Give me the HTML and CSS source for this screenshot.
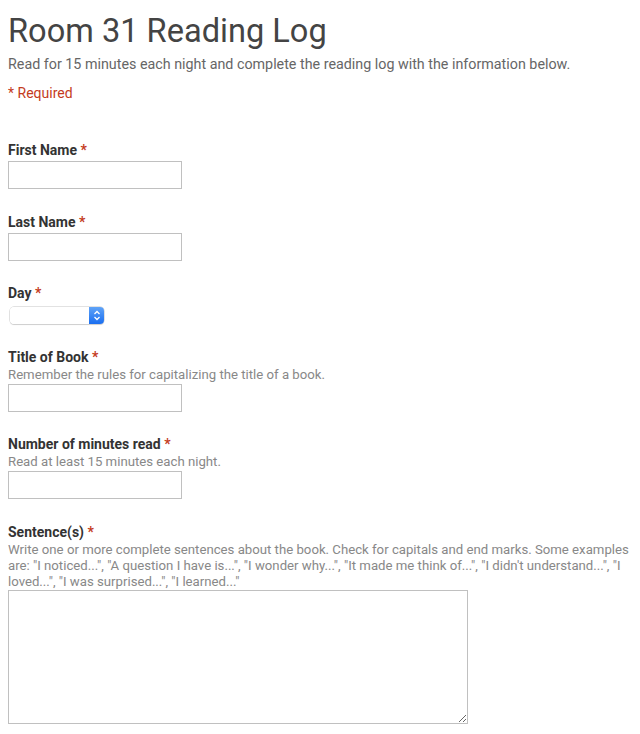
FILE: index.html
```html
<!DOCTYPE html>
<html lang="en">
<head>
    <meta charset="UTF-8">
    <meta name="viewport" content="width=device-width, initial-scale=1.0">
    <title>Room 31 Reading Log</title>
    <link rel="stylesheet" href="styles.css">
</head>
<body>

<!-- Form Header -->
<div class="form-header">
    <h1>Room 31 Reading Log</h1>
    <p class="form-desc">Read for 15 minutes each night and complete the reading log with the information below.</p>
    <p class="required-note">* Required</p>
</div>

<form class="log-form" onsubmit="return false;">
    <div class="field">
        <label for="first_name">First Name <span class="star">*</span></label>
        <input type="text" id="first_name" name="first_name" required>
    </div>

    <div class="field">
        <label for="last_name">Last Name <span class="star">*</span></label>
        <input type="text" id="last_name" name="last_name" required>
    </div>

    <div class="field">
        <label for="day">Day <span class="star">*</span></label>
        <div class="select-wrap">
            <select id="day" name="day" required>
                <option value=""></option>
                <option value="mon">Monday</option>
                <option value="tue">Tuesday</option>
                <option value="wed">Wednesday</option>
                <option value="thu">Thursday</option>
                <option value="fri">Friday</option>
            </select>
            <span class="select-arrows">
                <svg width="8" height="11" viewBox="0 0 8 11">
                    <path d="M1.5 4 L4 1.5 L6.5 4 M1.5 7 L4 9.5 L6.5 7" fill="none" stroke="#fff" stroke-width="1.3"/>
                </svg>
            </span>
        </div>
    </div>

    <div class="field">
        <label for="book_title">Title of Book <span class="star">*</span></label>
        <div class="help">Remember the rules for capitalizing the title of a book.</div>
        <input type="text" id="book_title" name="book_title" required>
    </div>

    <div class="field">
        <label for="minutes">Number of minutes read <span class="star">*</span></label>
        <div class="help">Read at least 15 minutes each night.</div>
        <input type="text" id="minutes" name="minutes" required>
    </div>

    <div class="field">
        <label for="sentences">Sentence(s) <span class="star">*</span></label>
        <div class="help">Write one or more complete sentences about the book. Check for capitals and end marks. Some examples are: "I noticed...", "A question I have is...", "I wonder why...", "It made me think of...", "I didn't understand...", "I loved...", "I was surprised...", "I learned..."</div>
        <textarea id="sentences" name="sentences" required></textarea>
    </div>
</form>

</body>
</html>
```

FILE: styles.css
```css
/* Basic Reset */
* {
    box-sizing: border-box;
    margin: 0;
    padding: 0;
}

body {
    font-family: Roboto, "Liberation Sans", Arial, sans-serif;
    background-color: #fff;
    color: #333;
    padding: 0 8px;
}

/* Header */
.form-header h1 {
    font-size: 32.6px;
    font-weight: 400;
    line-height: 40px;
    color: #444;
    margin-top: 11px;
}

.form-desc {
    font-size: 14.3px;
    line-height: 20px;
    color: #666;
    margin-top: 3px;
}

.required-note {
    font-size: 14px;
    line-height: 20px;
    color: #c43b1d;
    margin-top: 9px;
}

/* Form Fields */
.log-form {
    margin-top: 37px;
}

.field {
    display: flex;
    flex-direction: column;
    align-items: flex-start;
    margin-bottom: 22.5px;
}

.field label {
    font-size: 14px;
    line-height: 20px;
    font-weight: bold;
    color: #333;
}

.star {
    color: #c43b1d;
}

.help {
    font-size: 13.2px;
    line-height: 16px;
    color: #888;
}

.field input,
.field textarea {
    width: 174px;
    height: 28px;
    margin-top: 1px;
    border: 1px solid #c0c0c0;
    background-color: #fff;
    font-family: inherit;
    font-size: 13px;
    padding: 4px;
}

.field textarea {
    width: 460px;
    height: 134px;
    margin-top: 0;
}

/* Mac style select */
.select-wrap {
    display: flex;
    margin: 4px 0 0 2px;
    height: 17px;
    border-radius: 4px;
    box-shadow: 0 0 0 0.5px #c6c6c6, 0 1px 1px rgba(0, 0, 0, 0.15);
}

.select-wrap select {
    appearance: none;
    -webkit-appearance: none;
    width: 79px;
    height: 17px;
    border: none;
    border-radius: 4px 0 0 4px;
    background-color: #fff;
    font-family: inherit;
    font-size: 12px;
    outline: none;
}

.select-arrows {
    width: 15px;
    height: 17px;
    display: flex;
    align-items: center;
    justify-content: center;
    border-radius: 0 4px 4px 0;
    background: linear-gradient(#5fa3f7, #1a6ef0);
}
```
